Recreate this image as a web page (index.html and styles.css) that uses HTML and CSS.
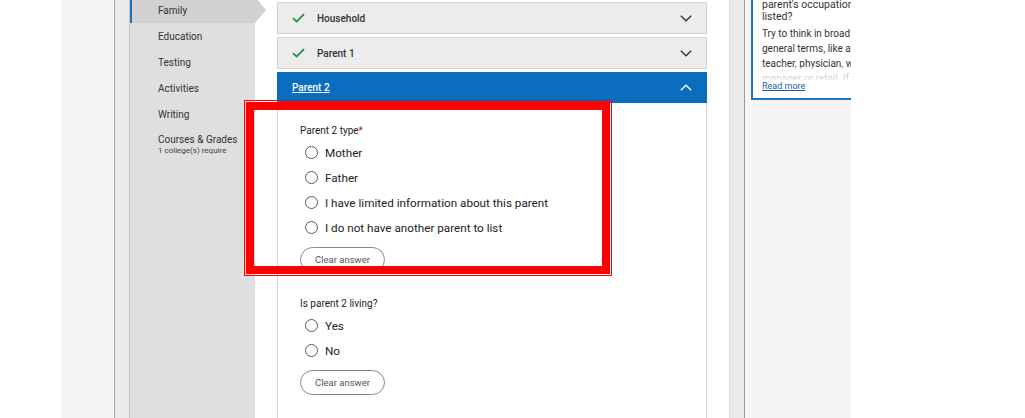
FILE: index.html
```html
<!DOCTYPE html>
<html lang="en">
<head>
<meta charset="utf-8">
<title>Family - Parent 2</title>
<link rel="stylesheet" href="styles.css">
</head>
<body>
<div class="page">
  <div class="shell">
    <div class="frame">
      <nav class="sidebar">
        <ul class="nav">
          <li class="nav-item active">Family</li>
          <li class="nav-item">Education</li>
          <li class="nav-item">Testing</li>
          <li class="nav-item">Activities</li>
          <li class="nav-item">Writing</li>
          <li class="nav-item two"><span class="nav-title">Courses &amp; Grades</span><span class="nav-sub">1 college(s) require</span></li>
        </ul>
      </nav>
      <main class="main">
        <section class="card">
          <div class="acc">
            <svg class="check" width="13" height="10" viewBox="0 0 13 10"><path d="M1 5.2 L4.6 8.6 L12 1.2" fill="none" stroke="#1f8a3e" stroke-width="1.7"/></svg>
            <span class="acc-title">Household</span>
            <svg class="chev" width="12" height="7" viewBox="0 0 12 7"><path d="M0.8 0.8 L6 5.8 L11.2 0.8" fill="none" stroke="#333" stroke-width="1.3"/></svg>
          </div>
          <div class="acc">
            <svg class="check" width="13" height="10" viewBox="0 0 13 10"><path d="M1 5.2 L4.6 8.6 L12 1.2" fill="none" stroke="#1f8a3e" stroke-width="1.7"/></svg>
            <span class="acc-title">Parent 1</span>
            <svg class="chev" width="12" height="7" viewBox="0 0 12 7"><path d="M0.8 0.8 L6 5.8 L11.2 0.8" fill="none" stroke="#333" stroke-width="1.3"/></svg>
          </div>
          <div class="acc open">
            <a class="acc-link" href="#">Parent 2</a>
            <svg class="chev" width="12" height="7" viewBox="0 0 12 7"><path d="M0.8 6.2 L6 1.2 L11.2 6.2" fill="none" stroke="#fff" stroke-width="1.3"/></svg>
          </div>
          <div class="panel">
            <div class="question">
              <div class="q-label">Parent 2 type<span class="req">*</span></div>
              <label class="option"><span class="radio"></span><span class="opt-text">Mother</span></label>
              <label class="option"><span class="radio"></span><span class="opt-text">Father</span></label>
              <label class="option"><span class="radio"></span><span class="opt-text">I have limited information about this parent</span></label>
              <label class="option"><span class="radio"></span><span class="opt-text">I do not have another parent to list</span></label>
              <button class="clear">Clear answer</button>
            </div>
            <div class="question second">
              <div class="q-label">Is parent 2 living?</div>
              <label class="option"><span class="radio"></span><span class="opt-text">Yes</span></label>
              <label class="option"><span class="radio"></span><span class="opt-text">No</span></label>
              <button class="clear">Clear answer</button>
            </div>
          </div>
        </section>
      </main>
    </div>
    <aside class="help">
      <div class="tip">
        <div class="tip-title">
          <span class="line">What if I don't see my</span>
          <span class="line">parent's occupation is not</span>
          <span class="line">listed?</span>
        </div>
        <div class="tip-body">
          <span class="line">Try to think in broad and</span>
          <span class="line">general terms, like a nurse,</span>
          <span class="line">teacher, physician, web</span>
          <span class="line">manager or retail. If you</span>
        </div>
        <a class="read-more" href="#">Read more</a>
      </div>
    </aside>
  </div>
  <div class="highlight"></div>
</div>
</body>
</html>
```
FILE: styles.css
```css
* { box-sizing: border-box; }
html, body { margin: 0; padding: 0; background: #fff; }
body {
  width: 1025px;
  height: 418px;
  overflow: hidden;
  font-family: Roboto, "Liberation Sans", Arial, sans-serif;
  color: #222;
}
.page { position: relative; width: 1025px; height: 418px; }

.shell {
  margin-left: 61px;
  width: 790px;
  height: 418px;
  background: #f5f5f5;
  display: flex;
  padding-left: 53px;
}

.frame {
  width: 631px;
  height: 418px;
  flex-shrink: 0;
  display: flex;
  background: #ebebeb;
  border-left: 1px solid #a9a9a9;
  border-right: 1px solid #9c9c9c;
  padding: 0 14px;
}

/* sidebar */
.sidebar {
  width: 126px;
  flex-shrink: 0;
  background: #dfdfdf;
  border-left: 1px solid #c6c6c6;
}
.nav { list-style: none; margin: -3px 0 0; padding: 0; }
.nav-item {
  height: 26px;
  display: flex;
  align-items: center;
  padding-left: 28px;
  font-size: 10px;
  color: #333;
}
.nav-item.active {
  position: relative;
  z-index: 1;
  background: #d1d1d1;
  box-shadow: inset 2px 0 0 #1a6fc4;
}
.nav-item.active::after {
  content: "";
  position: absolute;
  right: -11px;
  top: 0;
  border-left: 11px solid #d1d1d1;
  border-top: 13px solid transparent;
  border-bottom: 13px solid transparent;
}
.nav-item.two {
  height: auto;
  display: block;
  padding-top: 7px;
}
.nav-title { display: block; line-height: 12px; }
.nav-sub { display: block; font-size: 8px; line-height: 10px; color: #444; }

/* main */
.main {
  width: 475px;
  flex-shrink: 0;
  background: #fff;
  border-right: 1px solid #dcdcdc;
  padding: 2px 22px 0;
}
.card {
  width: 430px;
  height: 100%;
  display: flex;
  flex-direction: column;
}
.acc {
  height: 32px;
  flex-shrink: 0;
  display: flex;
  align-items: center;
  padding: 0 14px;
  background: #ececec;
  border: 1px solid #d3d3d3;
  margin-bottom: 3px;
}
.check { margin-right: 12px; flex-shrink: 0; }
.acc-title { flex: 1; font-size: 10px; font-weight: 500; color: #333; }
.chev { flex-shrink: 0; }
.acc.open {
  height: 31px;
  background: #0b6dbd;
  border-color: #0b6dbd;
  margin-bottom: 0;
}
.acc-link {
  flex: 1;
  font-size: 10px;
  font-weight: 500;
  color: #fff;
  text-decoration: underline;
}

.panel {
  flex: 1;
  border-left: 1px solid #d6d6d6;
  border-right: 1px solid #d6d6d6;
  padding: 21px 0 0 22px;
}
.q-label {
  font-size: 10px;
  line-height: 14px;
  color: #222;
  margin-bottom: 2px;
}
.req { color: #c8102e; }
.option {
  height: 25px;
  display: flex;
  align-items: center;
  padding-left: 5px;
}
.radio {
  width: 13px;
  height: 13px;
  border-radius: 50%;
  border: 1.5px solid #5a5a5a;
  margin-right: 7px;
  flex-shrink: 0;
}
.opt-text { font-size: 11.7px; color: #222; }
.clear {
  margin-top: 7px;
  width: 85px;
  height: 25px;
  border: 1px solid #8a8a8a;
  border-radius: 13px;
  background: #fff;
  font-family: inherit;
  font-size: 9.5px;
  color: #555;
  padding: 0;
  display: flex;
  align-items: center;
  justify-content: center;
}
.question.second { margin-top: 25px; }

/* help panel */
.help {
  width: 106px;
  flex-shrink: 0;
  overflow: hidden;
  padding-left: 6px;
}
.tip {
  width: 170px;
  margin-top: -22px;
  background: #fff;
  border: 2px solid #1f74c6;
  padding: 7px 9px 6px;
}
.line { display: block; white-space: nowrap; }
.tip-title { font-size: 10.5px; line-height: 12px; color: #333; }
.tip-body {
  position: relative;
  margin-top: 3px;
  height: 54px;
  overflow: hidden;
  font-size: 10px;
  line-height: 15px;
  color: #333;
}
.tip-body::after {
  content: "";
  position: absolute;
  left: 0;
  right: 0;
  bottom: 0;
  height: 13px;
  background: linear-gradient(rgba(255,255,255,0.55), rgba(255,255,255,0.85));
}
.read-more {
  display: block;
  font-size: 9px;
  line-height: 12px;
  color: #1c5ea3;
  text-decoration: underline;
}

/* annotation overlay */
.highlight {
  position: absolute;
  left: 246px;
  top: 102px;
  width: 364px;
  height: 172px;
  border: 8px solid #ff0000;
  outline: 1px solid #ff0000;
  outline-offset: 1px;
}
```
